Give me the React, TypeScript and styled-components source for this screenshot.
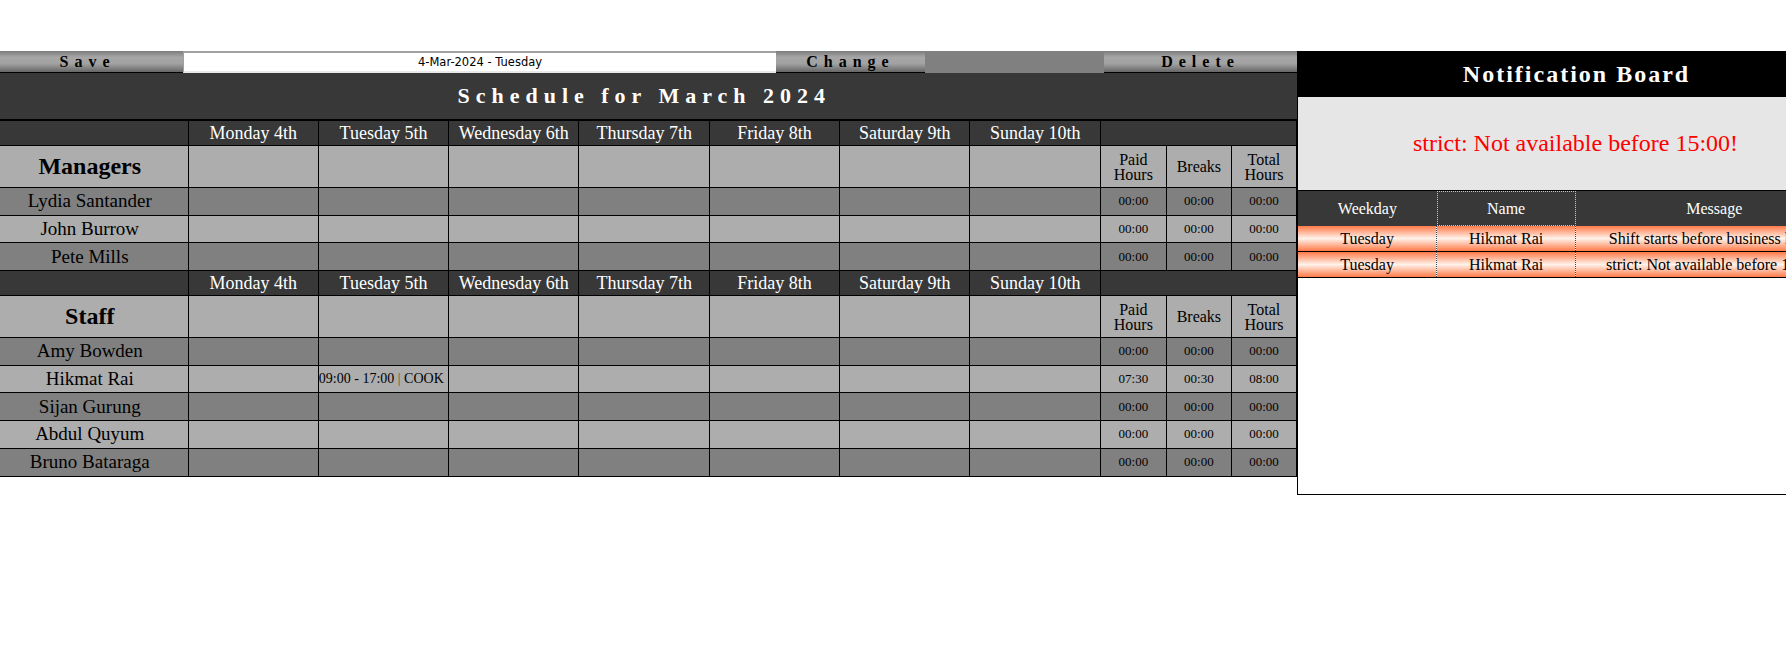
import React from "react";
import styled, {createGlobalStyle} from "styled-components";


const GlobalStyle = createGlobalStyle`
	html, body {
		margin: 0;
		padding: 0;
		background: #fff;
		overflow: hidden;
	}
	body {
		font-family: "Liberation Serif", "Times New Roman", serif;
	}
`;

const Page = styled.div`
	width: 1853px;
	padding-top: 51px;
	display: flex;
	align-items: flex-start;
`;

const SchedulePane = styled.section`
	width: 1297px;
	flex: none;
`;

const Toolbar = styled.div`
	display: flex;
	height: 22px;
`;

const ToolButton = styled.button<{$w: number; $nudge?: number}>`
	width: ${p => p.$w}px;
	height: 22px;
	margin: 0;
	padding: 0 ${p => p.$nudge || 0}px 0 0;
	box-sizing: border-box;
	border: none;
	border-bottom: 1px solid #000;
	background: linear-gradient(#7c7c7c, #a6a6a6 30%, #a2a2a2 60%, #666);
	color: #000;
	font: bold 16px "Liberation Serif", serif;
	letter-spacing: 6px;
	line-height: 20px;
	cursor: pointer;
`;

const DateInput = styled.input`
	width: 593px;
	height: 22px;
	margin: 0;
	padding: 0;
	box-sizing: border-box;
	border: none;
	border-top: 2px solid #a0a0a0;
	border-left: 1px solid #a0a0a0;
	border-bottom: 2px solid #e8e8e8;
	background: #fff;
	color: #000;
	text-align: center;
	font: 11.5px "DejaVu Sans", sans-serif;
	outline: none;
`;

const Filler = styled.div<{$w: number}>`
	width: ${p => p.$w}px;
	background: #808080;
`;

const ScheduleTable = styled.table`
	width: 100%;
	border-collapse: collapse;
	table-layout: fixed;
	color: #000;
	font-family: "Liberation Serif", serif;
`;

const TitleCell = styled.th`
	height: 46px;
	padding: 0 8px 0 0;
	background: #383838;
	border-bottom: 2px solid #000;
	color: #fff;
	font-size: 22px;
	font-weight: bold;
	letter-spacing: 6px;
`;

const DayRow = styled.tr`
	background: #383838;
	color: #fff;
`;

const DayCell = styled.th`
	height: 24px;
	padding: 0;
	border: 1px solid #000;
	font-size: 18px;
	font-weight: normal;
	&:first-child {border-left: none;}
`;

const Row = styled.tr<{$dark: boolean}>`
	background: ${p => p.$dark ? "#808080" : "#adadad"};
`;

const GroupCell = styled.th`
	height: 41px;
	padding: 0 8px 0 0;
	border: 1px solid #000;
	border-left: none;
	font-size: 24px;
	font-weight: bold;
`;

const HoursHead = styled.th`
	padding: 0;
	border: 1px solid #000;
	font-size: 16px;
	font-weight: normal;
	line-height: 15px;
`;

const NameCell = styled.td`
	height: 26.7px;
	padding: 0 8px 0 0;
	border: 1px solid #000;
	border-left: none;
	text-align: center;
	font-size: 19px;
`;

const ShiftCell = styled.td`
	padding: 0;
	border: 1px solid #000;
	font-size: 14px;
	white-space: nowrap;
	overflow: hidden;
`;

const Pipe = styled.span`
	color: #6b5424;
`;

const HoursCell = styled.td`
	padding: 0;
	border: 1px solid #000;
	text-align: center;
	font-size: 13px;
`;

const NoticePane = styled.aside`
	width: 556px;
	height: 444px;
	flex: none;
	box-sizing: border-box;
	border-left: 1px solid #000;
	border-bottom: 1px solid #000;
`;

const NoticeTitle = styled.h2`
	margin: 0;
	height: 46px;
	padding-left: 2px;
	background: #000;
	color: #fff;
	text-align: center;
	font: bold 24px/46px "Liberation Serif", serif;
	letter-spacing: 2px;
`;

const Alert = styled.div`
	height: 93px;
	display: flex;
	align-items: center;
	justify-content: center;
	background: #e6e6e6;
	color: #ff0000;
	font-size: 24px;
`;

const NoticeTable = styled.table`
	width: 100%;
	border-collapse: collapse;
	table-layout: fixed;
	font-family: "Liberation Serif", serif;
	font-size: 16px;
	text-align: center;
`;

const NoticeHead = styled.th<{$boxed?: boolean}>`
	height: 35px;
	padding: 0;
	background: #383838;
	border-top: 1px solid #000;
	${p => p.$boxed && "outline: 1px dotted #c8c8c8; outline-offset: -1px;"}
	color: #fff;
	font-weight: normal;
`;

const NoticeRow = styled.tr`
	background: linear-gradient(#ff7a48, #fff2ea 50%, #ff7a48);
	border-bottom: 1px solid #000;
`;

const NoticeCell = styled.td<{$divided?: boolean}>`
	height: 25px;
	padding: 0;
	white-space: nowrap;
	overflow: hidden;
	${p => p.$divided && "border-left: 1px dotted #444; border-right: 1px dotted #444;"}
`;


type Person = {
	name: string;
	shifts?: {[day: number]: string};
	paid: string;
	breaks: string;
	total: string;
};

const days = ["Monday 4th", "Tuesday 5th", "Wednesday 6th", "Thursday 7th", "Friday 8th", "Saturday 9th", "Sunday 10th"];

const managers: Person[] = [
	{name: "Lydia Santander", paid: "00:00", breaks: "00:00", total: "00:00"},
	{name: "John Burrow", paid: "00:00", breaks: "00:00", total: "00:00"},
	{name: "Pete Mills", paid: "00:00", breaks: "00:00", total: "00:00"},
];

const staff: Person[] = [
	{name: "Amy Bowden", paid: "00:00", breaks: "00:00", total: "00:00"},
	{name: "Hikmat Rai", shifts: {1: "09:00 - 17:00|COOK"}, paid: "07:30", breaks: "00:30", total: "08:00"},
	{name: "Sijan Gurung", paid: "00:00", breaks: "00:00", total: "00:00"},
	{name: "Abdul Quyum", paid: "00:00", breaks: "00:00", total: "00:00"},
	{name: "Bruno Bataraga", paid: "00:00", breaks: "00:00", total: "00:00"},
];

const notices = [
	{weekday: "Tuesday", name: "Hikmat Rai", message: "Shift starts before business hours"},
	{weekday: "Tuesday", name: "Hikmat Rai", message: "strict: Not available before 15:00!"},
];


function ShiftText({text}: {text: string}) {
	const [time, role] = text.split("|");
	return <>{time} <Pipe>|</Pipe> {role}</>;
}

function Group({title, people}: {title: string; people: Person[]}) {
	return (
		<>
			<DayRow>
				<DayCell />
				{days.map(day => <DayCell key={day}>{day}</DayCell>)}
				<DayCell colSpan={3} />
			</DayRow>
			<Row $dark={false}>
				<GroupCell>{title}</GroupCell>
				{days.map(day => <ShiftCell key={day} />)}
				<HoursHead>Paid<br />Hours</HoursHead>
				<HoursHead>Breaks</HoursHead>
				<HoursHead>Total<br />Hours</HoursHead>
			</Row>
			{people.map((person, i) => (
				<Row key={person.name} $dark={i % 2 === 0}>
					<NameCell>{person.name}</NameCell>
					{days.map((day, d) => (
						<ShiftCell key={day}>
							{person.shifts?.[d] && <ShiftText text={person.shifts[d]} />}
						</ShiftCell>
					))}
					<HoursCell>{person.paid}</HoursCell>
					<HoursCell>{person.breaks}</HoursCell>
					<HoursCell>{person.total}</HoursCell>
				</Row>
			))}
		</>
	);
}


export default function App() {
	return (
		<>
			<GlobalStyle />
			<Page>
				<SchedulePane>
					<Toolbar>
						<ToolButton $w={183} $nudge={8}>Save</ToolButton>
						<DateInput readOnly value="4-Mar-2024 - Tuesday" />
						<ToolButton $w={149}>Change</ToolButton>
						<Filler $w={179} />
						<ToolButton $w={193}>Delete</ToolButton>
					</Toolbar>
					<ScheduleTable>
						<colgroup>
							<col style={{width: 188}} />
							{days.map(day => <col key={day} />)}
							<col style={{width: 66}} />
							<col style={{width: 65}} />
							<col style={{width: 65}} />
						</colgroup>
						<thead>
							<tr>
								<TitleCell colSpan={11}>Schedule for March 2024</TitleCell>
							</tr>
						</thead>
						<tbody>
							<Group title="Managers" people={managers} />
							<Group title="Staff" people={staff} />
						</tbody>
					</ScheduleTable>
				</SchedulePane>

				<NoticePane>
					<NoticeTitle>Notification Board</NoticeTitle>
					<Alert>strict: Not available before 15:00!</Alert>
					<NoticeTable>
						<colgroup>
							<col style={{width: "25%"}} />
							<col style={{width: "25%"}} />
							<col style={{width: "50%"}} />
						</colgroup>
						<thead>
							<tr>
								<NoticeHead>Weekday</NoticeHead>
								<NoticeHead $boxed>Name</NoticeHead>
								<NoticeHead>Message</NoticeHead>
							</tr>
						</thead>
						<tbody>
							{notices.map((notice, i) => (
								<NoticeRow key={i}>
									<NoticeCell>{notice.weekday}</NoticeCell>
									<NoticeCell $divided>{notice.name}</NoticeCell>
									<NoticeCell>{notice.message}</NoticeCell>
								</NoticeRow>
							))}
						</tbody>
					</NoticeTable>
				</NoticePane>
			</Page>
		</>
	);
}
